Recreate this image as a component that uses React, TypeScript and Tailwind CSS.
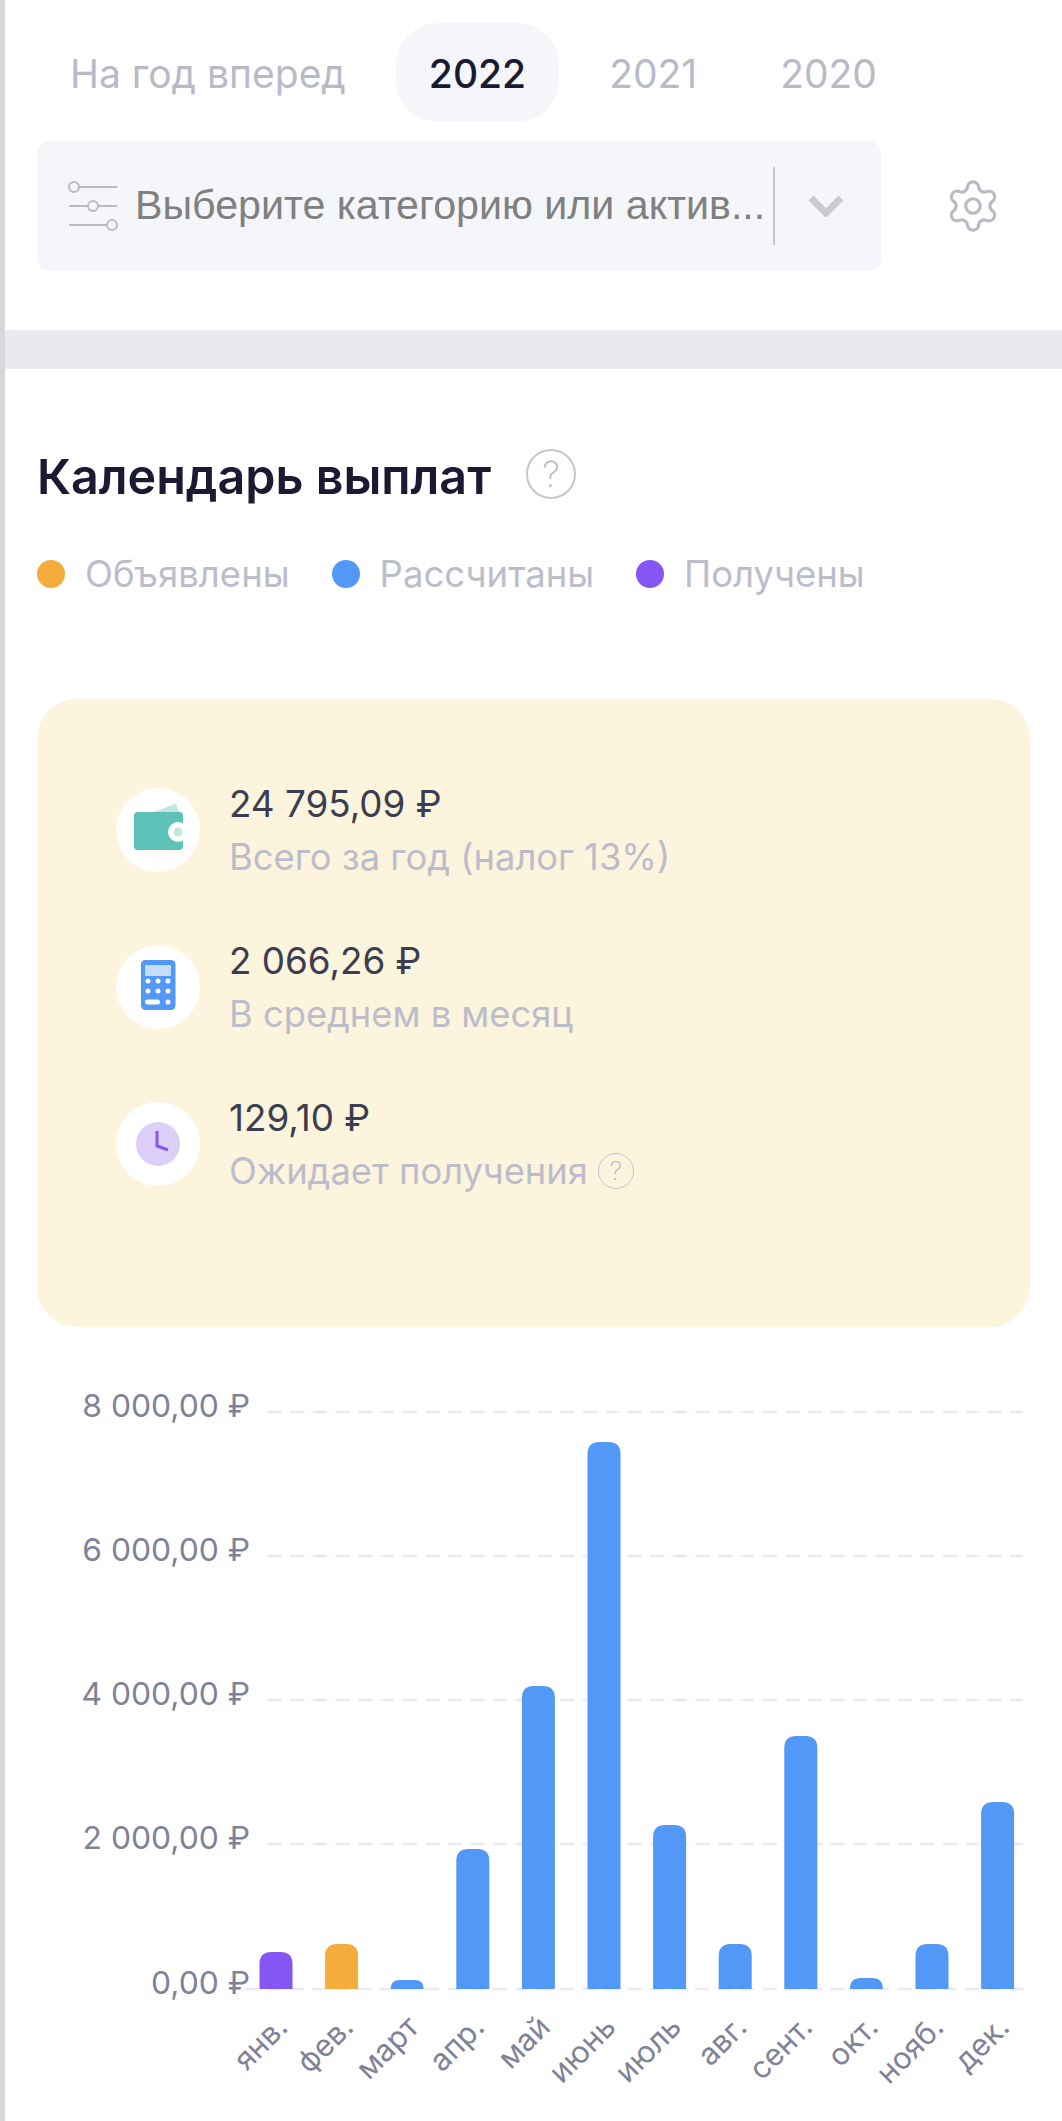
import { Settings } from 'lucide-react';

const BLUE = '#5298f7';
const ORANGE = '#f4ac3d';
const PURPLE = '#8556f4';

const months = [
  { name: 'янв.', top: 1952, color: PURPLE },
  { name: 'фев.', top: 1944, color: ORANGE },
  { name: 'март', top: 1980, color: BLUE },
  { name: 'апр.', top: 1849, color: BLUE },
  { name: 'май', top: 1686, color: BLUE },
  { name: 'июнь', top: 1442, color: BLUE },
  { name: 'июль', top: 1825, color: BLUE },
  { name: 'авг.', top: 1944, color: BLUE },
  { name: 'сент.', top: 1736, color: BLUE },
  { name: 'окт.', top: 1978, color: BLUE },
  { name: 'нояб.', top: 1944, color: BLUE },
  { name: 'дек.', top: 1802, color: BLUE },
];

const gridLines = [
  { y: 1412, label: '8 000,00 ₽', from: 268 },
  { y: 1556, label: '6 000,00 ₽', from: 268 },
  { y: 1700, label: '4 000,00 ₽', from: 268 },
  { y: 1844, label: '2 000,00 ₽', from: 268 },
  { y: 1989, label: '0,00 ₽', from: 245 },
];

const BASE = 1989;
const BAR_W = 33;

function barPath(x: number, top: number) {
  const r = Math.min(12, BASE - top);
  return `M${x} ${BASE}V${top + r}Q${x} ${top} ${x + r} ${top}H${x + BAR_W - r}Q${x + BAR_W} ${top} ${x + BAR_W} ${top + r}V${BASE}Z`;
}

function HelpMark({ size }: { size: 'lg' | 'sm' }) {
  return (
    <span
      className={
        size === 'lg'
          ? 'flex h-[50px] w-[50px] items-center justify-center rounded-full border-2 border-[#c4c5d0] text-[36px] leading-none font-extralight text-[#b5b6c2]'
          : 'flex h-[36px] w-[36px] items-center justify-center rounded-full border-[1.5px] border-[#c4c5d0] text-[26px] leading-none font-extralight text-[#b5b6c2]'
      }
    >
      ?
    </span>
  );
}

function FilterIcon() {
  return (
    <svg width="50" height="50" viewBox="0 0 50 50" fill="none" stroke="#b9bac6" strokeWidth="2" className="shrink-0">
      <circle cx="6" cy="6" r="5" />
      <path d="M11 6H49" />
      <circle cx="25" cy="25" r="5" />
      <path d="M1 25H20M30 25H49" />
      <circle cx="44" cy="44" r="5" />
      <path d="M1 44H39" />
    </svg>
  );
}

function WalletIcon() {
  return (
    <svg width="84" height="84" viewBox="0 0 84 84">
      <path d="M38 24L60 15.5L63 24Z" fill="#bfe6e1" />
      <rect x="18" y="24" width="49" height="38" rx="4" fill="#5cc1b6" />
      <circle cx="62" cy="44" r="10" fill="#fff" />
      <circle cx="62" cy="44" r="4.5" fill="#bfe6e1" />
    </svg>
  );
}

function CalcIcon() {
  const dots = [
    [32, 36], [42, 36], [52, 36],
    [32, 46], [42, 46], [52, 46],
    [52, 57],
  ];
  return (
    <svg width="84" height="84" viewBox="0 0 84 84">
      <rect x="25" y="15" width="34.5" height="50" rx="4.5" fill="#5298f7" />
      <rect x="29" y="20" width="26" height="11" rx="1" fill="#c5dcfb" />
      {dots.map(([cx, cy]) => (
        <circle key={`${cx}-${cy}`} cx={cx} cy={cy} r="2.5" fill="#fff" />
      ))}
      <rect x="29" y="54.5" width="15" height="5" rx="2.5" fill="#fff" />
    </svg>
  );
}

function ClockIcon() {
  return (
    <svg width="84" height="84" viewBox="0 0 84 84">
      <circle cx="42" cy="42" r="22" fill="#dccffa" />
      <path d="M41 29V44L52 48" fill="none" stroke="#8556f4" strokeWidth="3" strokeLinejoin="miter" />
    </svg>
  );
}

function SummaryRow({ icon, value, label, help }: { icon: React.ReactNode; value: string; label: string; help?: boolean }) {
  return (
    <div className="flex h-[84px] items-start">
      <div className="h-[84px] w-[84px] shrink-0 rounded-full bg-white">{icon}</div>
      <div className="ml-[29px] -mt-[2px] flex flex-col">
        <span className="h-[36px] text-[36.8px] leading-[36px] text-[#3b3d50]">{value}</span>
        <span className="mt-[17px] flex h-[36px] items-center gap-[10px] text-[36.3px] leading-[36px] text-[#bcbdcb]">
          {label}
          {help && <HelpMark size="sm" />}
        </span>
      </div>
    </div>
  );
}

function Legend({ color, label }: { color: string; label: string }) {
  return (
    <div className="flex items-center gap-[20px]">
      <span className="h-[28px] w-[28px] rounded-full" style={{ backgroundColor: color }} />
      <span className="text-[36.5px] leading-[40px] text-[#bcbdcb]">{label}</span>
    </div>
  );
}

function PayoutChart() {
  return (
    <svg width="1057" height="794" viewBox="5 1327 1057 794" className="block" fontFamily="Inter, sans-serif">
      {gridLines.map(line => (
        <g key={line.y}>
          <line x1={line.from} x2="1023" y1={line.y} y2={line.y} stroke="#e9eaf3" strokeWidth="2.5" strokeDasharray="14 8.5" />
          <text x="250" y={line.y + 5} textAnchor="end" fontSize="31.8" fill="#7f8298">{line.label}</text>
        </g>
      ))}
      {months.map((m, i) => {
        const x = 259.5 + i * 65.6;
        return (
          <g key={m.name}>
            <path d={barPath(x, m.top)} fill={m.color} />
            <text
              x="0"
              y="0"
              textAnchor="end"
              fontSize="30.5"
              fill="#7f8298"
              transform={`translate(${x + 30} 2029) rotate(-45)`}
            >
              {m.name}
            </text>
          </g>
        );
      })}
    </svg>
  );
}

export default function App() {
  return (
    <div className="h-[2121px] w-[1062px] overflow-hidden border-l-[5px] border-[#d8d8dc] bg-white font-[Inter,sans-serif]">
      <div className="flex gap-[17px] pt-[23px] pl-[32px]">
        <button className="h-[99px] px-[33px] pt-[3px] text-[39px] text-[#b9bac8]">На год вперед</button>
        <button className="h-[99px] rounded-[42px] bg-[#f4f6f9] px-[33px] pt-[3px] text-[39px] font-medium text-[#1a1b33]">2022</button>
        <button className="h-[99px] px-[33px] pt-[3px] text-[39px] text-[#b9bac8]">2021</button>
        <button className="h-[99px] px-[33px] pt-[3px] text-[39px] text-[#b9bac8]">2020</button>
      </div>

      <div className="mt-[19px] flex items-center pl-[32px]">
        <div className="flex h-[130px] w-[844px] items-center rounded-[12px] bg-[#f4f6f9] pl-[31px]">
          <FilterIcon />
          <span className="ml-[17px] w-[635px] shrink-0 truncate font-['Liberation_Sans',sans-serif] text-[41.2px] text-[#808080]">Выберите категорию или актив...</span>
          <span className="ml-[3px] h-[78px] w-[2px] bg-[#c6c7cc]" />
          <svg width="36" height="22" viewBox="0 0 36 22" fill="none" stroke="#cbcbcf" strokeWidth="7" className="ml-[33px]">
            <path d="M3 3L18 18L33 3" />
          </svg>
        </div>
        <Settings size={58} strokeWidth={1.3} color="#b9bac6" className="ml-[63px]" />
      </div>

      <div className="mt-[59px] h-[39px] bg-[#e9eaf0]" />

      <div className="mt-[83px] flex h-[50px] items-center pl-[32px]">
        <h2 className="text-[48.4px] leading-[50px] font-semibold text-[#1a1b33]">Календарь выплат</h2>
        <span className="ml-[35px] -translate-y-[3px]"><HelpMark size="lg" /></span>
      </div>

      <div className="mt-[52px] flex gap-[42px] pl-[32px]">
        <Legend color={ORANGE} label="Объявлены" />
        <Legend color={BLUE} label="Рассчитаны" />
        <Legend color={PURPLE} label="Получены" />
      </div>

      <div className="mt-[105px] ml-[32px] flex h-[628px] w-[993px] flex-col gap-[73px] rounded-[40px] bg-[#fdf4dd] pt-[89px] pl-[79px]">
        <SummaryRow icon={<WalletIcon />} value="24 795,09 ₽" label="Всего за год (налог 13%)" />
        <SummaryRow icon={<CalcIcon />} value="2 066,26 ₽" label="В среднем в месяц" />
        <SummaryRow icon={<ClockIcon />} value="129,10 ₽" label="Ожидает получения" help />
      </div>

      <PayoutChart />
    </div>
  );
}
